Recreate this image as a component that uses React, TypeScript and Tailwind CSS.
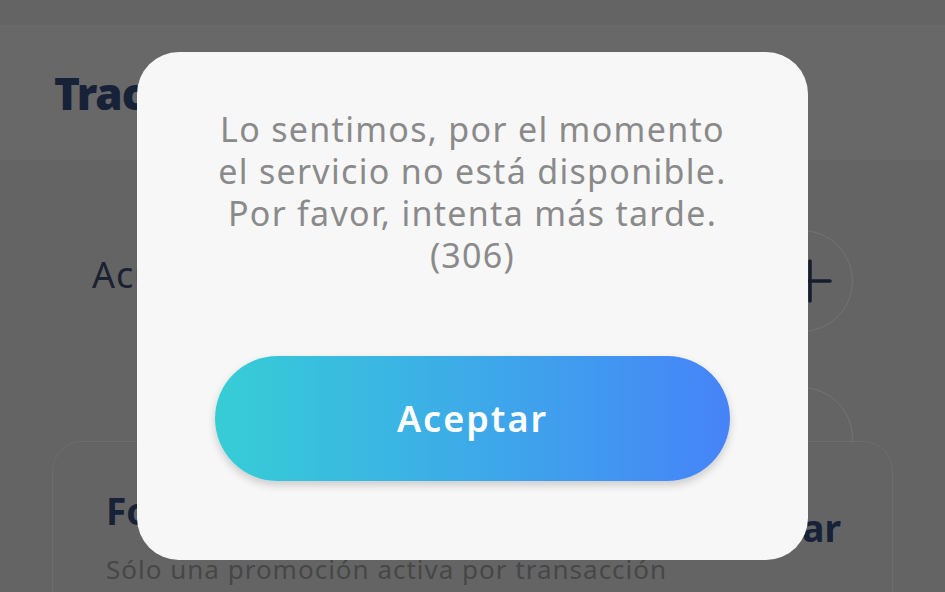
import React from 'react';

const font = { fontFamily: '"Noto Sans", "DejaVu Sans", sans-serif' };

function PlusButton() {
  return (
    <div className="w-[102px] h-[102px] rounded-full border-[1.5px] border-[#737373] flex items-center justify-center">
      <svg width="44" height="44" viewBox="0 0 44 44" className="ml-[16px]">
        <path d="M22 2v40M2 22h40" stroke="#161d2c" strokeWidth="3.5" strokeLinecap="round" />
      </svg>
    </div>
  );
}

export default function App() {
  return (
    <div className="relative w-[945px] h-[592px] overflow-hidden bg-[#646464]" style={font}>
      {/* Pantalla de fondo (atenuada) */}
      <header className="mt-[25px] h-[135px] bg-[#686868] flex items-center px-[54px]">
        <h1 className="text-[44px] font-black text-[#172137] tracking-tight">Tracking</h1>
      </header>

      <section className="pl-[92px] pr-[92px] pt-[70px] flex items-center justify-between">
        <p className="text-[36px] text-[#1a2231] -translate-y-[6px] tracking-[1px]">Acumular puntos</p>
        <PlusButton />
      </section>

      <div className="flex justify-end pr-[92px] mt-[55px] h-[54px] overflow-hidden">
        <div className="w-[102px] h-[102px] rounded-full border-[1.5px] border-[#737373] shrink-0" />
      </div>

      <section className="mx-[52px] rounded-[30px] border border-[#6d6d6d] px-[53px] pt-[50px] h-[200px]">
        <div className="flex items-end justify-between">
          <h2 className="text-[37px] font-bold text-[#172137] leading-none">Formas de pago</h2>
          <span className="text-[37px] font-bold text-[#172137] leading-none -mr-[2px] translate-y-[17px]">Cambiar</span>
        </div>
        <p className="mt-[21px] text-[26px] text-[#474747] tracking-[1px]">Sólo una promoción activa por transacción</p>
      </section>

      {/* Diálogo */}
      <div className="absolute left-[137px] top-[52px] w-[671px] h-[508px] rounded-[42px] bg-[#f7f7f8] px-[78px] pt-[56px] flex flex-col">
        <p className="text-center text-[34px] leading-[42px] text-[#8a8a8a] tracking-[1.3px]">
          Lo sentimos, por el momento
          <br />
          el servicio no está disponible.
          <br />
          Por favor, intenta más tarde.
          <br />
          (306)
        </p>
        <button className="mt-[80px] h-[125px] w-full rounded-full bg-gradient-to-r from-[#36cdd5] to-[#4683f8] text-white text-[36px] font-semibold tracking-[2px] shadow-[0_4px_8px_rgba(0,0,0,0.18)]">
          Aceptar
        </button>
      </div>
    </div>
  );
}
